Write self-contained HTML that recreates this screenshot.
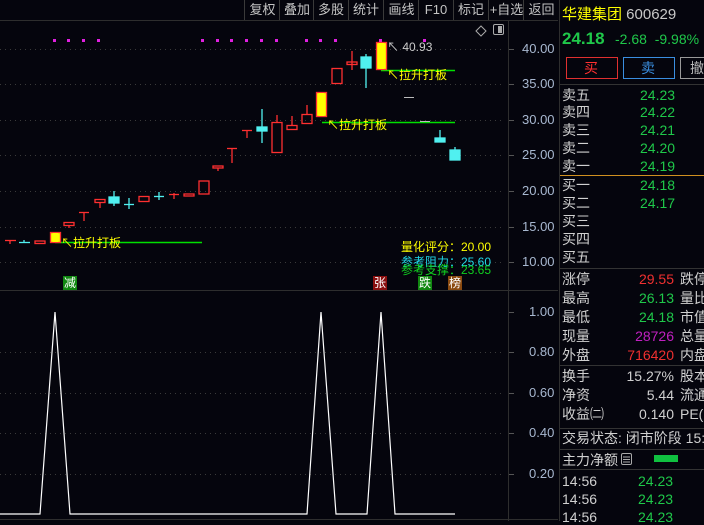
<!DOCTYPE html>
<html><head><meta charset="utf-8"><style>
*{margin:0;padding:0;box-sizing:border-box}
body{width:704px;height:521px;background:#05050d;overflow:hidden;position:relative;font-family:"Liberation Sans","Noto Sans CJK SC",sans-serif;color:#c8c8c8}
.a{position:absolute;white-space:nowrap;line-height:1}
.ax{position:absolute;font-size:13px;color:#a8b8d0;line-height:14px}
.tb{position:absolute;top:0;height:20px;font-size:13px;color:#c4c4c4;line-height:19px;text-align:center;border-left:1px solid #3a3a3a}
.r{position:absolute;font-size:14px;line-height:1;white-space:nowrap}
.g{color:#1fc84a}.rd{color:#f03030}.w{color:#d0d0d0}
.v{right:30px}
</style></head><body>
<svg width="704" height="521" style="position:absolute;left:0;top:0" xmlns="http://www.w3.org/2000/svg">
<g stroke="#2e2e2e" stroke-width="1">
<line x1="0" y1="20.5" x2="558" y2="20.5"/>
<line x1="508.5" y1="20" x2="508.5" y2="521"/>
<line x1="559.5" y1="0" x2="559.5" y2="521"/>
<line x1="0" y1="290.5" x2="558" y2="290.5"/>
<line x1="0" y1="519.5" x2="558" y2="519.5"/>
</g>
<g stroke="#3a3a3a" stroke-dasharray="1,4">
<line x1="0" y1="49.5" x2="505" y2="49.5"/><line x1="0" y1="84.5" x2="505" y2="84.5"/>
<line x1="0" y1="120.5" x2="505" y2="120.5"/><line x1="0" y1="155.5" x2="505" y2="155.5"/>
<line x1="0" y1="191.5" x2="505" y2="191.5"/><line x1="0" y1="227.5" x2="505" y2="227.5"/>
<line x1="0" y1="262.5" x2="505" y2="262.5"/>
<line x1="0" y1="352.5" x2="505" y2="352.5"/><line x1="0" y1="393.5" x2="505" y2="393.5"/>
<line x1="0" y1="433.5" x2="505" y2="433.5"/><line x1="0" y1="474.5" x2="505" y2="474.5"/>
</g>
<g stroke="#555"><line x1="509" y1="49.5" x2="514" y2="49.5"/><line x1="509" y1="84.5" x2="514" y2="84.5"/><line x1="509" y1="120.5" x2="514" y2="120.5"/><line x1="509" y1="155.5" x2="514" y2="155.5"/><line x1="509" y1="191.5" x2="514" y2="191.5"/><line x1="509" y1="227.5" x2="514" y2="227.5"/><line x1="509" y1="262.5" x2="514" y2="262.5"/>
<line x1="509" y1="312.5" x2="514" y2="312.5"/><line x1="509" y1="352.5" x2="514" y2="352.5"/><line x1="509" y1="393.5" x2="514" y2="393.5"/><line x1="509" y1="433.5" x2="514" y2="433.5"/><line x1="509" y1="474.5" x2="514" y2="474.5"/></g>
<g fill="#e020e0">
<rect x="53" y="39" width="3" height="3"/><rect x="67" y="39" width="3" height="3"/><rect x="82" y="39" width="3" height="3"/><rect x="97" y="39" width="3" height="3"/>
<rect x="201" y="39" width="3" height="3"/><rect x="216" y="39" width="3" height="3"/><rect x="230" y="39" width="3" height="3"/><rect x="245" y="39" width="3" height="3"/><rect x="260" y="39" width="3" height="3"/><rect x="275" y="39" width="3" height="3"/>
<rect x="305" y="39" width="3" height="3"/><rect x="319" y="39" width="3" height="3"/><rect x="334" y="39" width="3" height="3"/><rect x="379" y="39" width="3" height="3"/><rect x="423" y="39" width="3" height="3"/>
</g>
<g stroke="#00e000" stroke-width="1.5">
<line x1="55" y1="242.5" x2="202" y2="242.5"/><line x1="322" y1="122.5" x2="455" y2="122.5"/><line x1="381" y1="70.5" x2="455" y2="70.5"/>
</g>
<g stroke="#ff3030" stroke-width="1.3" fill="none">
<line x1="5" y1="240.5" x2="16" y2="240.5"/><line x1="10" y1="240" x2="10" y2="244"/>
<rect x="35" y="241" width="10" height="2.5"/>
<rect x="64" y="222.5" width="10" height="3"/><line x1="69" y1="225" x2="69" y2="228"/>
<line x1="79" y1="212.5" x2="89" y2="212.5"/><line x1="84" y1="212" x2="84" y2="221"/>
<rect x="95" y="199.5" width="10" height="3"/><line x1="100" y1="202" x2="100" y2="208"/>
<rect x="139" y="196.5" width="10" height="5"/>
<line x1="169" y1="194.5" x2="179" y2="194.5"/><line x1="174" y1="193" x2="174" y2="199"/>
<rect x="184" y="194" width="10" height="2"/>
<rect x="199" y="181" width="10" height="13"/>
<rect x="213" y="166" width="10" height="2"/><line x1="218" y1="168" x2="218" y2="171"/>
<line x1="227" y1="148.5" x2="237" y2="148.5"/><line x1="232" y1="148" x2="232" y2="163"/>
<line x1="242" y1="130.5" x2="252" y2="130.5"/><line x1="247" y1="130" x2="247" y2="138"/>
<rect x="272" y="122.5" width="10" height="30"/><line x1="277" y1="115" x2="277" y2="122"/>
<rect x="287" y="125.5" width="10" height="4"/><line x1="292" y1="116" x2="292" y2="125"/>
<rect x="302" y="114.5" width="10" height="9"/><line x1="307" y1="105" x2="307" y2="114"/>
<rect x="332" y="68.5" width="10" height="15"/>
<rect x="347" y="62" width="10" height="2.5"/><line x1="352" y1="51" x2="352" y2="70"/>
</g>
<g fill="#ffff00" stroke="#ff3030" stroke-width="1.3">
<rect x="50.5" y="232.5" width="10" height="10"/><rect x="316.5" y="92.5" width="10" height="24"/><rect x="376.5" y="42.5" width="10" height="27"/>
</g>
<g fill="#ffff00"><rect x="53" y="233" width="5" height="9"/><rect x="319" y="93" width="5" height="23"/><rect x="379" y="43" width="5" height="26"/></g>
<g stroke="#50f0f0" stroke-width="1.3" fill="#50f0f0">
<line x1="19" y1="242.5" x2="30" y2="242.5"/><line x1="24" y1="240" x2="24" y2="243"/>
<rect x="109" y="197" width="10" height="6"/><line x1="114" y1="191" x2="114" y2="206"/>
<line x1="124" y1="204.5" x2="134" y2="204.5"/><line x1="129" y1="198" x2="129" y2="209"/>
<line x1="154" y1="196.5" x2="164" y2="196.5"/><line x1="159" y1="192" x2="159" y2="200"/>
<rect x="257" y="127" width="10" height="4"/><line x1="262" y1="109" x2="262" y2="143"/>
<rect x="361" y="57" width="10" height="11"/><line x1="366" y1="54" x2="366" y2="88"/>
<rect x="435" y="138" width="10" height="4"/><line x1="440" y1="130" x2="440" y2="138"/>
<rect x="450" y="150" width="10" height="10"/><line x1="455" y1="147" x2="455" y2="150"/>
</g>
<g stroke="#bbb"><line x1="404" y1="97.5" x2="414" y2="97.5"/><line x1="420" y1="121.5" x2="430" y2="121.5"/></g>
<polyline fill="none" stroke="#fff" stroke-width="1.2" points="0,514 40,514 55,312 70,514 307,514 321,312 336,514 367,514 381,312 395,514 455,514"/>
<path d="M476 31 l5 -5 l5 5 l-5 5z" fill="none" stroke="#aaa"/>
<rect x="493.5" y="24.5" width="10" height="10" rx="1.5" fill="none" stroke="#aaa"/><rect x="498" y="26" width="4" height="7" fill="#aaa"/>
<rect x="566.5" y="57.5" width="51" height="21" fill="none" stroke="#e03030"/>
<rect x="623.5" y="57.5" width="51" height="21" fill="none" stroke="#3a8ee0"/>
<rect x="680.5" y="57.5" width="40" height="21" fill="none" stroke="#999"/>
<line x1="560" y1="84.5" x2="704" y2="84.5" stroke="#333"/>
<line x1="560" y1="175.5" x2="704" y2="175.5" stroke="#d09020"/>
<line x1="560" y1="268.5" x2="704" y2="268.5" stroke="#333"/>
<line x1="560" y1="365.5" x2="704" y2="365.5" stroke="#333"/>
<line x1="560" y1="428.5" x2="704" y2="428.5" stroke="#333"/>
<line x1="560" y1="449.5" x2="704" y2="449.5" stroke="#333"/>
<line x1="560" y1="469.5" x2="704" y2="469.5" stroke="#333"/>
<rect x="654" y="455" width="24" height="7" fill="#10c040"/>
<rect x="621.5" y="453.5" width="10" height="11" rx="1.5" fill="none" stroke="#aaa"/><g stroke="#aaa"><line x1="623" y1="457" x2="630" y2="457"/><line x1="623" y1="459.5" x2="630" y2="459.5"/><line x1="623" y1="462" x2="630" y2="462"/></g>
</svg>
<div class="tb" style="left:244px;width:36px">复权</div>
<div class="tb" style="left:279px;width:35px">叠加</div>
<div class="tb" style="left:313px;width:35px">多股</div>
<div class="tb" style="left:348px;width:35px">统计</div>
<div class="tb" style="left:383px;width:36px">画线</div>
<div class="tb" style="left:418px;width:35px">F10</div>
<div class="tb" style="left:453px;width:35px">标记</div>
<div class="tb" style="left:488px;width:36px">+自选</div>
<div class="tb" style="left:523px;width:36px">返回</div>
<div class="ax" style="left:522px;top:42px">40.00</div>
<div class="ax" style="left:522px;top:77px">35.00</div>
<div class="ax" style="left:522px;top:113px">30.00</div>
<div class="ax" style="left:522px;top:148px">25.00</div>
<div class="ax" style="left:522px;top:184px">20.00</div>
<div class="ax" style="left:522px;top:220px">15.00</div>
<div class="ax" style="left:522px;top:255px">10.00</div>
<div class="ax" style="left:529px;top:305px">1.00</div>
<div class="ax" style="left:529px;top:345px">0.80</div>
<div class="ax" style="left:529px;top:386px">0.60</div>
<div class="ax" style="left:529px;top:426px">0.40</div>
<div class="ax" style="left:529px;top:467px">0.20</div>
<div class="a" style="left:387px;top:41px;font-size:12px;color:#ccc">↖ 40.93</div>
<div class="a" style="left:61px;top:237px;font-size:12px;color:#ffff00">↖拉升打板</div>
<div class="a" style="left:327px;top:119px;font-size:12px;color:#ffff00">↖拉升打板</div>
<div class="a" style="left:387px;top:69px;font-size:12px;color:#ffff00">↖拉升打板</div>
<div class="a" style="left:401px;top:241px;font-size:12px;color:#ffff00">量化评分：20.00</div>
<div class="a" style="left:401px;top:256px;font-size:12px;color:#20d8e8">参考阻力：25.60</div>
<div class="a" style="left:401px;top:264px;font-size:12px;color:#10d020">参考支撑：23.65</div>
<div class="a" style="left:63px;top:276px;font-size:12px;color:#fff;background:#118811;padding:1px 1px">减</div>
<div class="a" style="left:373px;top:276px;font-size:12px;color:#fff;background:#8a1010;padding:1px 1px">张</div>
<div class="a" style="left:418px;top:276px;font-size:12px;color:#fff;background:#118811;padding:1px 1px">跌</div>
<div class="a" style="left:448px;top:276px;font-size:12px;color:#fff;background:#8a4a10;padding:1px 1px">榜</div>
<div class="r" style="left:562px;top:7px;font-size:15px;color:#ffff00">华建集团 <span style="color:#c8c8c8">600629</span></div>
<div class="r g" style="left:562px;top:30px;font-size:17px;font-weight:bold">24.18</div>
<div class="r g" style="left:615px;top:32px;font-size:14px">-2.68 &nbsp;-9.98%</div>
<div class="r" style="left:584px;top:61px;color:#ff3030">买</div>
<div class="r" style="left:641px;top:61px;color:#3a8ee0">卖</div>
<div class="r" style="left:690px;top:61px;color:#bbb">撤</div>
<div class="r w" style="left:562px;top:88px">卖五</div><div class="r g" style="left:640px;top:88px">24.23</div>
<div class="r w" style="left:562px;top:105px">卖四</div><div class="r g" style="left:640px;top:105px">24.22</div>
<div class="r w" style="left:562px;top:123px">卖三</div><div class="r g" style="left:640px;top:123px">24.21</div>
<div class="r w" style="left:562px;top:141px">卖二</div><div class="r g" style="left:640px;top:141px">24.20</div>
<div class="r w" style="left:562px;top:159px">卖一</div><div class="r g" style="left:640px;top:159px">24.19</div>
<div class="r w" style="left:562px;top:178px">买一</div><div class="r g" style="left:640px;top:178px">24.18</div>
<div class="r w" style="left:562px;top:196px">买二</div><div class="r g" style="left:640px;top:196px">24.17</div>
<div class="r w" style="left:562px;top:214px">买三</div>
<div class="r w" style="left:562px;top:232px">买四</div>
<div class="r w" style="left:562px;top:250px">买五</div>
<div class="r w" style="left:562px;top:272px">涨停</div><div class="r rd v" style="top:272px">29.55</div><div class="r w" style="left:680px;top:272px">跌停</div>
<div class="r w" style="left:562px;top:291px">最高</div><div class="r g v" style="top:291px">26.13</div><div class="r w" style="left:680px;top:291px">量比</div>
<div class="r w" style="left:562px;top:310px">最低</div><div class="r g v" style="top:310px">24.18</div><div class="r w" style="left:680px;top:310px">市值</div>
<div class="r w" style="left:562px;top:329px">现量</div><div class="r v" style="top:329px;color:#c020c0">28726</div><div class="r w" style="left:680px;top:329px">总量</div>
<div class="r w" style="left:562px;top:348px">外盘</div><div class="r rd v" style="top:348px">716420</div><div class="r w" style="left:680px;top:348px">内盘</div>
<div class="r w" style="left:562px;top:369px">换手</div><div class="r w v" style="top:369px">15.27%</div><div class="r w" style="left:680px;top:369px">股本</div>
<div class="r w" style="left:562px;top:388px">净资</div><div class="r w v" style="top:388px">5.44</div><div class="r w" style="left:680px;top:388px">流通</div>
<div class="r w" style="left:562px;top:407px">收益㈡</div><div class="r w v" style="top:407px">0.140</div><div class="r w" style="left:680px;top:407px">PE(动</div>
<div class="r w" style="left:562px;top:431px">交易状态: 闭市阶段 15:00</div>
<div class="r w" style="left:562px;top:453px">主力净额</div>
<div class="r w" style="left:562px;top:474px">14:56</div><div class="r g" style="left:638px;top:474px">24.23</div>
<div class="r w" style="left:562px;top:492px">14:56</div><div class="r g" style="left:638px;top:492px">24.23</div>
<div class="r w" style="left:562px;top:510px">14:56</div><div class="r g" style="left:638px;top:510px">24.23</div>
</body></html>
